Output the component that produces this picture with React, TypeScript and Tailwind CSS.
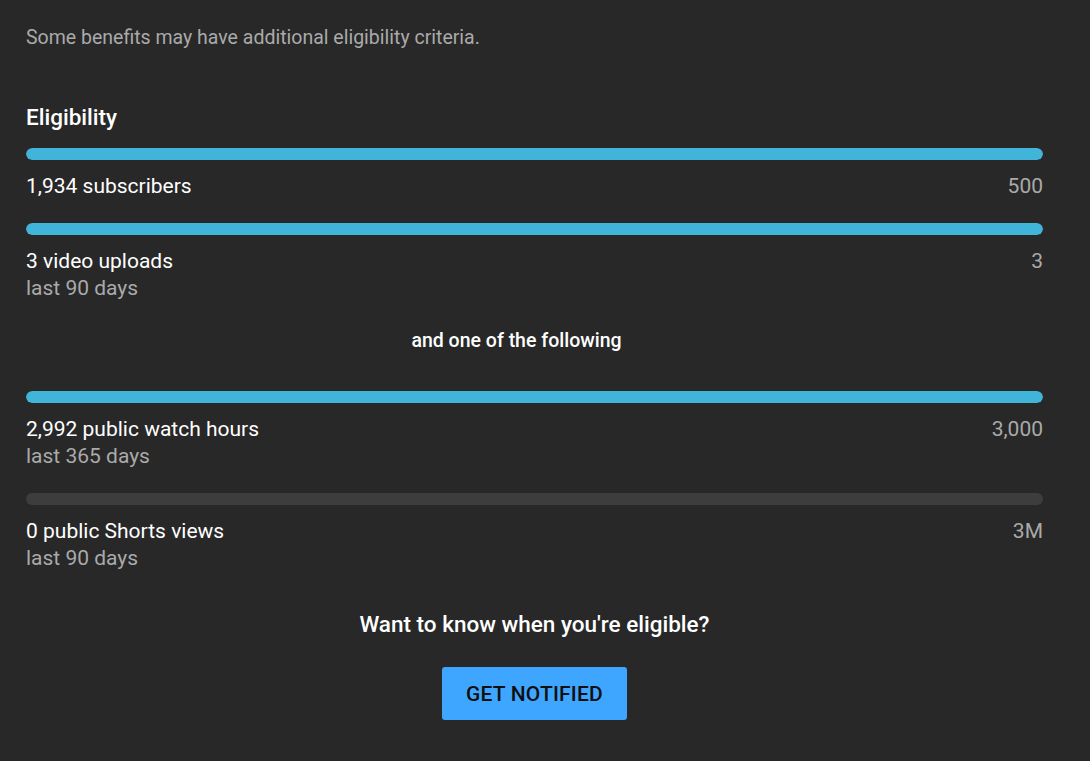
import React from 'react';

interface Criterion {
  label: string;
  target: string;
  sub?: string;
  progress: number;
}

const before: Criterion[] = [
  { label: '1,934 subscribers', target: '500', progress: 1 },
  { label: '3 video uploads', target: '3', sub: 'last 90 days', progress: 1 },
];

const after: Criterion[] = [
  { label: '2,992 public watch hours', target: '3,000', sub: 'last 365 days', progress: 1 },
  { label: '0 public Shorts views', target: '3M', sub: 'last 90 days', progress: 0 },
];

function Row({ item, first }: { item: Criterion; first?: boolean }) {
  return (
    <div className={first ? '' : 'mt-[23.5px]'}>
      <div className="h-3 w-full rounded-full bg-[#3d3d3d] overflow-hidden">
        <div
          className="h-3 rounded-full bg-[#41b4da]"
          style={{ width: `${item.progress * 100}%` }}
        ></div>
      </div>
      <div className="mt-[12.5px] flex justify-between text-[21px] leading-[27px]">
        <span className="text-white">{item.label}</span>
        <span className="text-[#aaaaaa]">{item.target}</span>
      </div>
      {item.sub && <div className="text-[21px] leading-[27px] text-[#aaaaaa]">{item.sub}</div>}
    </div>
  );
}

export default function App() {
  return (
    <div
      className="min-h-[761px] bg-[#282828] pl-[26px] pr-[47px] pt-[26px]"
      style={{ fontFamily: 'Roboto, "Liberation Sans", sans-serif' }}
    >
      <p className="text-[19.5px] leading-6 text-[#aaaaaa]">
        Some benefits may have additional eligibility criteria.
      </p>

      <h2 className="mt-[53px] text-[22.5px] leading-7 font-medium text-white">Eligibility</h2>

      <div className="mt-[17px]">
        {before.map((item, i) => (
          <Row key={item.label} item={item} first={i === 0} />
        ))}
      </div>

      <div className="mt-[27px] pr-[36px] text-center text-[19.5px] leading-6 font-medium text-white">
        and one of the following
      </div>

      <div className="mt-[38.5px]">
        {after.map((item, i) => (
          <Row key={item.label} item={item} first={i === 0} />
        ))}
      </div>

      <div className="mt-[38.5px] text-center text-[22.5px] leading-7 font-medium text-white">
        Want to know when you're eligible?
      </div>

      <div className="mt-[29px] flex justify-center">
        <button className="h-[53px] w-[185px] rounded-[3px] bg-[#3ea6ff] pt-[2px] text-[21px] font-medium tracking-[0.2px] text-[#0f0f0f]">
          GET NOTIFIED
        </button>
      </div>
    </div>
  );
}
